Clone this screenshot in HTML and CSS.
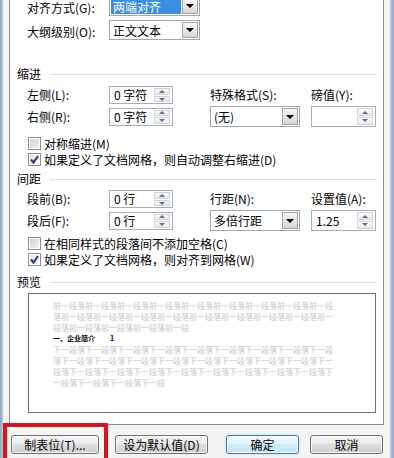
FILE: index.html
```html
<!DOCTYPE html>
<html lang="zh-CN">
<head>
    <meta charset="UTF-8">
    <meta name="viewport" content="width=device-width, initial-scale=1.0">
    <title>段落</title>
    <link rel="stylesheet" href="styles.css">
</head>
<body>
    <div class="window">
        <div class="frame-left"></div>
        <div class="dialog">
            <div class="page">
                <div class="general">
                    <div class="field-row">
                        <span class="label">对齐方式(G):</span>
                        <div class="select wide"><span class="value selected">两端对齐</span><span class="arrow"></span></div>
                    </div>
                    <div class="field-row">
                        <span class="label">大纲级别(O):</span>
                        <div class="select wide"><span class="value">正文文本</span><span class="arrow"></span></div>
                    </div>
                </div>

                <div class="section-title indent-title">缩进</div>
                <div class="grid grid-indent">
                    <span class="label c1 r1">左侧(L):</span>
                    <div class="spin small c2 r1"><span class="value">0 字符</span><span class="spin-btns"><i class="up"></i><i class="down"></i></span></div>
                    <span class="label c4 r1">特殊格式(S):</span>
                    <span class="label c6 r1">磅值(Y):</span>
                    <span class="label c1 r2">右侧(R):</span>
                    <div class="spin small c2 r2"><span class="value">0 字符</span><span class="spin-btns"><i class="up"></i><i class="down"></i></span></div>
                    <div class="select c4 r2"><span class="value">(无)</span><span class="arrow"></span></div>
                    <div class="spin c6 r2"><span class="value"></span><span class="spin-btns"><i class="up"></i><i class="down"></i></span></div>
                </div>
                <div class="checks checks-indent">
                    <label class="check"><span class="box"></span>对称缩进(M)</label>
                    <label class="check"><span class="box checked"><svg width="11" height="11" viewBox="0 0 11 11"><path d="M2 5.5 L4.5 8.5 L9 2" fill="none" stroke="#253a6b" stroke-width="2"/></svg></span>如果定义了文档网格，则自动调整右缩进(D)</label>
                </div>

                <div class="section-title spacing-title">间距</div>
                <div class="grid grid-spacing">
                    <span class="label c1 r1">段前(B):</span>
                    <div class="spin small c2 r1"><span class="value">0 行</span><span class="spin-btns"><i class="up"></i><i class="down"></i></span></div>
                    <span class="label c4 r1">行距(N):</span>
                    <span class="label c6 r1">设置值(A):</span>
                    <span class="label c1 r2">段后(F):</span>
                    <div class="spin small c2 r2"><span class="value">0 行</span><span class="spin-btns"><i class="up"></i><i class="down"></i></span></div>
                    <div class="select c4 r2"><span class="value">多倍行距</span><span class="arrow"></span></div>
                    <div class="spin c6 r2"><span class="value">1.25</span><span class="spin-btns"><i class="up"></i><i class="down"></i></span></div>
                </div>
                <div class="checks checks-spacing">
                    <label class="check"><span class="box"></span>在相同样式的段落间不添加空格(C)</label>
                    <label class="check"><span class="box checked"><svg width="11" height="11" viewBox="0 0 11 11"><path d="M2 5.5 L4.5 8.5 L9 2" fill="none" stroke="#253a6b" stroke-width="2"/></svg></span>如果定义了文档网格，则对齐到网格(W)</label>
                </div>

                <div class="section-title preview-title">预览</div>
                <div class="preview">
                    <div class="pv-gray">前一段落前一段落前一段落前一段落前一段落前一段落前一段落前一段落前一段落前一段落前一段落前一段落前一段落前一段落前一段落前一段落前一段落前一段落前一段落前一段落前一段落前一段</div>
                    <div class="pv-head">一、企业简介<span class="pv-num">1</span></div>
                    <div class="pv-gray">下一段落下一段落下一段落下一段落下一段落下一段落下一段落下一段落下一段落下一段落下一段落下一段落下一段落下一段落下一段落下一段落下一段落下一段落下一段落下一段落下一段落下一段落下一段落下一段落下一段落下一段落下一段落下一段落下一段落下一段</div>
                </div>
            </div>

            <div class="buttons">
                <div class="btn-group left">
                    <button class="btn tabs">制表位(T)...</button>
                    <button class="btn defaults">设为默认值(D)</button>
                </div>
                <div class="btn-group right">
                    <button class="btn ok">确定</button>
                    <button class="btn cancel">取消</button>
                </div>
            </div>
        </div>
        <div class="frame-right"></div>

        <div class="annotation"></div>
    </div>
</body>
</html>
```

FILE: styles.css
```css
* {
    box-sizing: border-box;
}
body {
    margin: 0;
    width: 394px;
    height: 458px;
    overflow: hidden;
    font-family: "Noto Sans CJK SC", "Microsoft YaHei", sans-serif;
    font-size: 12px;
    color: #000;
    background: #f0f0f0;
}
.window {
    position: relative;
    display: flex;
    height: 458px;
}
.frame-left {
    width: 3px;
    background: linear-gradient(to right, #8da4c2, #b8c9dc);
}
.frame-right {
    width: 4px;
    background: linear-gradient(to right, #c3d2e2, #8da4c2);
}
.dialog {
    flex: 1;
    display: flex;
    flex-direction: column;
    padding: 0 6px;
    background: #f4f4f4;
}
.page {
    background: #fff;
    border: 1px solid #898c95;
    border-top: none;
    padding: 0 6px 11px 7px;
}
.label {
    line-height: 16px;
    white-space: nowrap;
}

/* top fields */
.general {
    display: flex;
    flex-direction: column;
    gap: 4px;
    margin: -4px 0 0 10px;
}
.field-row {
    display: flex;
    align-items: center;
    height: 20px;
}
.field-row .label {
    width: 82px;
    line-height: 13px;
    padding-top: 2px;
}

/* combo boxes */
.select {
    display: flex;
    align-items: stretch;
    height: 21px;
    border: 1px solid #a5a7ad;
    background: #fff;
    padding: 1px;
}
.field-row .select {
    height: 20px;
}
.select.wide {
    width: 91px;
}
.select .value {
    flex: 1;
    padding-left: 2px;
    line-height: 17px;
    white-space: nowrap;
}
.field-row .select .value {
    line-height: 13px;
    padding-top: 2px;
}
.select .value.selected {
    margin-right: 1px;
    background: #3b8ee3;
    color: #fff;
}
.select .arrow {
    position: relative;
    width: 16px;
    border: 1px solid #a4a4a4;
    background: linear-gradient(#f5f5f5, #e6e6e6 50%, #d6d6d6);
}
.select .arrow::after {
    content: "";
    position: absolute;
    left: 3px;
    top: 50%;
    margin-top: -2px;
    border-left: 4px solid transparent;
    border-right: 4px solid transparent;
    border-top: 4px solid #000;
}

/* spin boxes */
.spin {
    display: flex;
    height: 21px;
    border: 1px solid #abadb3;
    background: #fff;
    padding: 1px;
}
.spin.small {
    height: 18px;
}
.spin .value {
    flex: 1;
    padding-left: 3px;
    line-height: 14px;
    white-space: nowrap;
}
.spin:not(.small) .value {
    line-height: 17px;
}
.spin-btns {
    display: flex;
    flex-direction: column;
    width: 16px;
    gap: 1px;
    margin-right: 1px;
}
.spin-btns i {
    position: relative;
    flex: 1;
    border: 1px solid #d0d3d8;
    background: linear-gradient(#fbfbfb, #e9eaec);
}
.spin-btns i::after {
    content: "";
    position: absolute;
    left: 4px;
    border-left: 3px solid transparent;
    border-right: 3px solid transparent;
}
.spin-btns .up::after {
    bottom: 1px;
    border-bottom: 3px solid #5d6d88;
}
.spin-btns .down::after {
    top: 1px;
    border-top: 3px solid #5d6d88;
}

/* section headings */
.section-title {
    display: flex;
    align-items: center;
    gap: 9px;
    height: 16px;
    line-height: 16px;
}
.section-title::after {
    content: "";
    flex: 1;
    border-top: 1px solid #d6dfe6;
}
.indent-title {
    margin-top: 26px;
}
.spacing-title {
    margin-top: 4px;
}
.preview-title {
    margin-top: 7px;
}

/* indent / spacing grids */
.grid {
    display: grid;
    grid-template-columns: 82px 64px 37px 90px 11px 65px;
    grid-template-rows: 18px 21px;
    row-gap: 2px;
    align-items: center;
    margin-left: 10px;
}
.grid-indent {
    margin-top: 4px;
}
.grid-spacing {
    margin-top: 3px;
}
.c1 { grid-column: 1; }
.c2 { grid-column: 2; }
.c4 { grid-column: 4; }
.c6 { grid-column: 6; }
.r1 { grid-row: 1; }
.r2 { grid-row: 2; }

/* check boxes */
.checks {
    margin-left: 11px;
}
.checks-indent {
    margin-top: 8px;
}
.checks-spacing {
    margin-top: 4px;
}
.check {
    display: flex;
    align-items: center;
    gap: 3px;
    height: 16px;
    white-space: nowrap;
}
.box {
    display: flex;
    align-items: center;
    justify-content: center;
    width: 13px;
    height: 13px;
    border: 1px solid #8e8f8f;
    background: linear-gradient(135deg, #cfcfcf, #f4f4f4);
    box-shadow: inset 0 0 0 1px #fff;
}
.box.checked {
    background: linear-gradient(135deg, #e2e2e2, #fbfbfb);
}

/* preview */
.preview {
    height: 120px;
    margin: 3px 1px 0 11px;
    padding: 6px 0 0 24px;
    border: 1px solid #6e6e6e;
    background: #fff;
}
.pv-gray {
    width: 280px;
    font-size: 8px;
    line-height: 11px;
    color: #c8c8c8;
    word-break: break-all;
}
.pv-head {
    font-size: 7px;
    font-weight: bold;
    line-height: 11px;
}
.pv-num {
    margin-left: 15px;
}

/* bottom buttons */
.buttons {
    display: flex;
    justify-content: space-between;
    margin-top: 10px;
    padding: 0 1px 0 2px;
}
.btn-group {
    display: flex;
}
.btn-group.left {
    gap: 16px;
}
.btn-group.right {
    gap: 11px;
}
.btn {
    height: 19px;
    padding: 0;
    border: 1px solid #707070;
    border-radius: 3px;
    background: linear-gradient(#f2f2f2, #ebebeb 45%, #dddddd 50%, #cfcfcf);
    box-shadow: inset 0 0 0 1px rgba(255, 255, 255, 0.7);
    font-family: inherit;
    font-size: 12px;
    line-height: 17px;
    color: #000;
}
.tabs { width: 88px; }
.defaults { width: 93px; }
.ok, .cancel { width: 73px; }
.ok {
    border-color: #3c7fb1;
    background: linear-gradient(#f2f9fd, #e3f2fb 45%, #d3ebf8 50%, #c6e4f5);
    box-shadow: inset 0 0 0 1px rgba(255, 255, 255, 0.8), 0 0 2px #8ccbee;
}

/* red highlight drawn over the screenshot */
.annotation {
    position: absolute;
    left: 3px;
    top: 423px;
    width: 105px;
    height: 45px;
    border: 4px solid #d9141c;
}
```
